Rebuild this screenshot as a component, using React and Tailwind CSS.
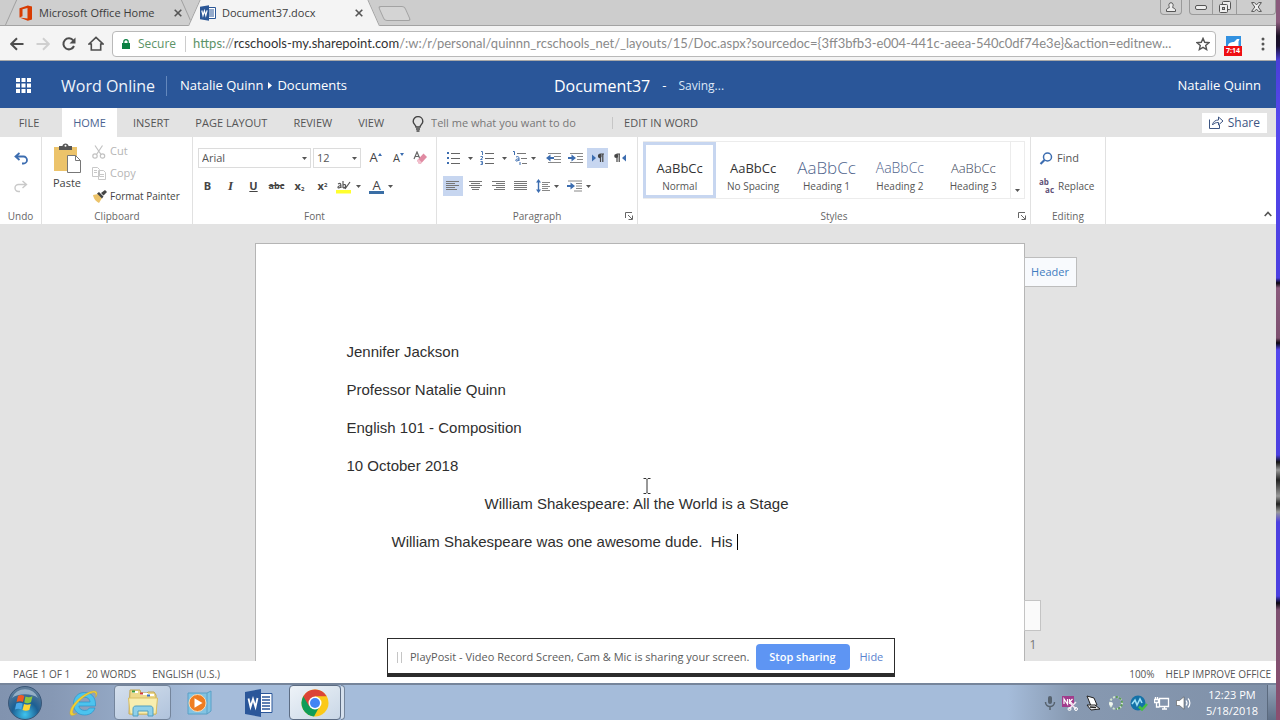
import React from "react";

const STYLES = [
  { name: "Normal", cls: "text-[13px] text-[#333]", frame: "border-[#c7d6f0]" },
  { name: "No Spacing", cls: "text-[13px] text-[#333]", frame: "border-transparent" },
  { name: "Heading 1", cls: "text-[17px] font-light text-[#4f648c]", frame: "border-transparent" },
  { name: "Heading 2", cls: "text-[14px] font-light text-[#4f648c]", frame: "border-transparent" },
  { name: "Heading 3", cls: "text-[13px] font-light text-[#3c4558]", frame: "border-transparent" },
];

/* ---------- small shared pieces ---------- */

function Arrow() {
  return (
    <svg width="5" height="3" viewBox="0 0 5 3" className="shrink-0 fill-[#555]" aria-hidden="true">
      <path d="M0 0h5L2.500 3z" />
    </svg>
  );
}

function Tool({ label, w = "w-[23px]", active, disabled, children }) {
  return (
    <button
      type="button"
      aria-label={label}
      disabled={disabled}
      className={`flex h-5 shrink-0 items-center justify-center gap-1 ${w} ${active ? "bg-[#c7d6f0]" : ""}`}
    >
      {children}
    </button>
  );
}

function Group({ label, className, launcher, children }) {
  return (
    <section aria-label={label} className={`flex shrink-0 flex-col pt-1 ${className}`}>
      <div className="h-[67px]">{children}</div>
      <div className="flex h-4 items-center text-[10px] text-[#666]">
        <span className={`flex-1 text-center ${launcher ? "pl-3" : ""}`}>{label}</span>
        {launcher && (
          <button type="button" aria-label={`${label} settings`} className="mr-1 w-2">
            <svg width="8" height="8" viewBox="0 0 8 8" fill="none" stroke="#666" aria-hidden="true">
              <path d="M.5 6V.5H7M3 3l4 4M7.500 3.500v4h-4" />
            </svg>
          </button>
        )}
      </div>
    </section>
  );
}

function Lines({ rows }) {
  return (
    <svg width="14" height="12" viewBox="0 0 14 12" stroke="#777" aria-hidden="true">
      {rows.map(([a, b], i) => (
        <path key={i} d={`M${a} ${i * 2 + 1.5}H${b}`} />
      ))}
    </svg>
  );
}

/* ---------- browser chrome ---------- */

function BrowserTab({ icon, title, active, className }) {
  const fill = active
    ? "before:bg-[#f4f4f4] after:bg-[#f4f4f4] z-10 h-[26px]"
    : "before:bg-[#cfcfcf] after:bg-[#cfcfcf] h-[25px]";
  return (
    <div
      className={`relative flex items-center before:absolute before:inset-y-0 before:left-0 before:w-1/2 before:origin-bottom before:-skew-x-[24deg] before:border-l before:border-[#a0a0a0] after:absolute after:inset-y-0 after:right-0 after:w-1/2 after:origin-bottom after:skew-x-[24deg] after:border-r after:border-[#a0a0a0] ${fill} ${className}`}
    >
      <button type="button" className="relative z-10 flex flex-1 items-center gap-[6px] text-[11px] text-[#3c3c3c]">
        {icon}
        <span>{title}</span>
      </button>
      <button type="button" aria-label={`Close ${title}`} className="relative z-10">
        <svg width="8" height="8" viewBox="0 0 8 8" stroke="#555" strokeWidth="1.600" aria-hidden="true">
          <path d="M.7.7l6.600 6.600M7.300.7L.7 7.300" />
        </svg>
      </button>
    </div>
  );
}

function OfficeIcon() {
  return (
    <svg width="14" height="16" viewBox="0 0 14 16" aria-hidden="true">
      <path d="M.5 3.200L8.800.4l4.200 1.200v12.800L8.800 15.700.5 12.600l8 .9V3L3.500 4.200v7L.5 12.400z" fill="#d83b01" />
    </svg>
  );
}

function WordFileIcon() {
  return (
    <svg width="16" height="16" viewBox="0 0 16 16" aria-hidden="true">
      <path d="M7.500 2.500h8v11h-8z" fill="#fff" stroke="#2b5797" />
      <path d="M9 5h5M9 7h5M9 9h5M9 11h5" stroke="#2b5797" />
      <path d="M0 1.800L9 .3v15.400L0 14.200z" fill="#2b5797" />
      <path d="M1.800 5.500l1.200 5 1.400-4.700 1.400 4.700 1.300-5.200" fill="none" stroke="#fff" strokeWidth="1.200" />
    </svg>
  );
}

function TabStrip() {
  return (
    <div className="flex h-[26px] items-start border-b border-[#a3a3a3] bg-[#cdcdcd]">
      <BrowserTab icon={<OfficeIcon />} title="Microsoft Office Home" className="ml-[5px] w-[188px] pl-[14px] pr-[11px] pt-px" />
      <BrowserTab icon={<WordFileIcon />} title="Document37.docx" active className="-ml-[5px] w-[192px] pl-[12px] pr-[17px]" />
      <button
        type="button"
        aria-label="New tab"
        className="ml-[1px] mt-[6px] h-[15px] w-[27px] skew-x-[24deg] rounded-[3px] border border-[#a3a3a3] bg-[#d4d4d4]"
      />
      <div className="flex-1" />
      <button type="button" aria-label="Profile" className="mr-[7px] flex h-[15px] w-[22px] items-center justify-center rounded-b border border-t-0 border-[#9a9a9a]">
        <svg width="10" height="10" viewBox="0 0 10 10" fill="#eee" stroke="#555" aria-hidden="true">
          <path d="M.5 9.500V8c0-1.200 1.500-2 2.700-2.200V4.500C2.600 3.800 2.600.7 5 .7s2.400 3.100 1.800 3.800v1.300C8 6 9.500 6.800 9.500 8v1.500z" />
        </svg>
      </button>
      <div className="flex h-[15px] divide-x divide-[#9a9a9a] rounded-b border border-t-0 border-[#9a9a9a]">
        <button type="button" aria-label="Minimize" className="flex w-[23px] items-center justify-center">
          <svg width="12" height="5" viewBox="0 0 12 5" fill="#eee" stroke="#555" aria-hidden="true">
            <rect x=".5" y=".5" width="11" height="4" rx="1.500" />
          </svg>
        </button>
        <button type="button" aria-label="Restore" className="flex w-[24px] items-center justify-center">
          <svg width="12" height="12" viewBox="0 0 12 12" fill="#eee" stroke="#555" aria-hidden="true">
            <rect x="3.500" y=".5" width="8" height="8" rx="1" />
            <rect x=".5" y="3.500" width="8" height="8" rx="1" />
            <rect x="3.500" y="6.500" width="2" height="2" fill="#bbb" />
          </svg>
        </button>
        <button type="button" aria-label="Close" className="flex w-[38px] items-center justify-center">
          <svg width="11" height="10" viewBox="0 0 11 10" fill="#eee" stroke="#555" strokeLinejoin="round" aria-hidden="true">
            <path d="M.6.600h2.800l2.100 2.300L7.600.6h2.800L7.200 5l3.200 4.400H7.600L5.500 7.100 3.400 9.400H.6L3.800 5z" />
          </svg>
        </button>
      </div>
    </div>
  );
}

function Toolbar() {
  return (
    <div className="flex h-[35px] items-center border-b border-[#a9a9a9] bg-[#f4f4f4] pl-[10px] pt-px">
      <div className="flex items-center gap-[12px]">
        <button type="button" aria-label="Back">
          <svg width="14" height="14" viewBox="0 0 14 14" fill="none" stroke="#4d4d4d" strokeWidth="2" aria-hidden="true">
            <path d="M13.500 7H1.500M7 1.200L1.200 7 7 12.800" />
          </svg>
        </button>
        <button type="button" aria-label="Forward" disabled>
          <svg width="14" height="14" viewBox="0 0 14 14" fill="none" stroke="#cfcfcf" strokeWidth="2" aria-hidden="true">
            <path d="M.5 7h12M7 1.200L12.800 7 7 12.800" />
          </svg>
        </button>
        <button type="button" aria-label="Reload">
          <svg width="14" height="14" viewBox="0 0 14 14" aria-hidden="true">
            <path d="M12 9A5.500 5.500 0 1 1 11.300 3.500" fill="none" stroke="#4d4d4d" strokeWidth="2" />
            <path d="M13.500.5v6h-6z" fill="#4d4d4d" />
          </svg>
        </button>
        <button type="button" aria-label="Home">
          <svg width="16" height="15" viewBox="0 0 16 15" fill="none" stroke="#4d4d4d" strokeWidth="1.600" aria-hidden="true">
            <path d="M1 8L8 1.300 15 8h-2.300v6H3.300V8z" />
          </svg>
        </button>
      </div>
      <div className="ml-[8px] flex h-[26px] min-w-0 flex-1 items-center rounded-sm border border-[#b9b9b9] bg-white">
        <button type="button" className="ml-[9px] flex shrink-0 items-center gap-[8px] text-[12px] text-[#5c9367]">
          <svg width="8" height="10" viewBox="0 0 8 10" aria-hidden="true">
            <path d="M1.800 4.500V2.800a2.200 2.200 0 0 1 4.400 0v1.700" fill="none" stroke="#0b8043" strokeWidth="1.200" />
            <rect y="4" width="8" height="6" fill="#0b8043" />
          </svg>
          Secure
        </button>
        <span className="ml-[9px] h-4 w-px shrink-0 bg-[#ccc]" />
        <div
          role="textbox"
          aria-label="Address"
          tabIndex={0}
          className="ml-[7px] min-w-0 flex-1 overflow-hidden whitespace-nowrap font-['Lato',sans-serif] text-[13px] text-[#8a8a8a]"
        >
          <span className="text-[#5c9367]">https</span>://<span className="text-[#333]">rcschools-my.sharepoint.com</span>
          /:w:/r/personal/quinnn_rcschools_net/_layouts/15/Doc.aspx?sourcedoc=&#123;3ff3bfb3-e004-441c-aeea-540c0df74e3e&#125;&amp;action=editnew...
        </div>
        <button type="button" aria-label="Bookmark" className="mr-[5px] shrink-0">
          <svg width="14" height="14" viewBox="0 0 14 14" fill="none" stroke="#555" strokeWidth="1.400" aria-hidden="true">
            <path d="M7 1.400l1.700 3.900 4.200.4-3.200 2.800.95 4.100L7 10.400l-3.650 2.200.95-4.100L1.100 5.700l4.200-.4z" />
          </svg>
        </button>
      </div>
      <button type="button" aria-label="Screen recorder" className="ml-[8px] flex w-[18px] flex-col items-center pt-1">
        <svg width="15" height="10" viewBox="0 0 15 10" aria-hidden="true">
          <path d="M0 0h15v10H0z" fill="#3291e0" />
          <path d="M2 10c0-3 3-4 6-4l3-3h2.500l-1 2.500V10z" fill="#fff" />
        </svg>
        <span className="h-[10px] w-full bg-[#ee0f14] text-center text-[7px] font-bold leading-[10px] text-white">7:14</span>
      </button>
      <button type="button" aria-label="Browser menu" className="ml-[19px] mr-[11px]">
        <svg width="4" height="14" viewBox="0 0 4 14" fill="#555" aria-hidden="true">
          <circle cx="2" cy="2" r="1.500" />
          <circle cx="2" cy="7" r="1.500" />
          <circle cx="2" cy="12" r="1.500" />
        </svg>
      </button>
    </div>
  );
}

/* ---------- Word Online ---------- */

function AppHeader() {
  return (
    <header className="grid h-[47px] grid-cols-[1fr_auto_1fr] items-center bg-[#2a5699] pt-[2px] text-[13px] text-white">
      <div className="flex items-center">
        <button type="button" aria-label="App launcher" className="ml-4">
          <svg width="15" height="15" viewBox="0 0 15 15" fill="#fff" aria-hidden="true">
            {[0, 5.5, 11].map((y) => [0, 5.5, 11].map((x) => <rect key={`${x}-${y}`} x={x} y={y} width="4" height="4" />))}
          </svg>
        </button>
        <a href="#home" className="ml-[30px] text-[16px] text-[#eef3fb]">Word Online</a>
        <span className="ml-[11px] h-5 w-px bg-[#6488bd]" />
        <nav aria-label="Location" className="ml-[13px] flex items-center gap-[5px]">
          <a href="#owner">Natalie Quinn</a>
          <svg width="4" height="7" viewBox="0 0 4 7" fill="#fff" aria-hidden="true">
            <path d="M0 0l4 3.500L0 7z" />
          </svg>
          <a href="#documents">Documents</a>
        </nav>
      </div>
      <div className="flex items-center pl-[2px]">
        <h1 className="text-[16px]">Document37</h1>
        <span className="mx-[12px]">-</span>
        <span className="text-[12px] text-[#dbe7f7]">Saving...</span>
      </div>
      <a href="#account" className="mr-[15px] justify-self-end">Natalie Quinn</a>
    </header>
  );
}

function RibbonTabs() {
  return (
    <div className="flex h-[29px] items-center bg-[#e3e3e3] text-[11px] text-[#555]">
      <button type="button" className="h-full w-[62px] pr-1 pt-[2px]">FILE</button>
      <button type="button" className="mr-[3px] h-full w-[55px] bg-white pt-[2px] text-[#4a6390]">HOME</button>
      <button type="button" className="h-full px-[13px] pt-[2px]">INSERT</button>
      <button type="button" className="h-full px-[13px] pt-[2px]">PAGE LAYOUT</button>
      <button type="button" className="h-full px-[13px] pt-[2px]">REVIEW</button>
      <button type="button" className="h-full px-[13px] pt-[2px]">VIEW</button>
      <label className="ml-[15px] flex h-full items-center gap-[7px] pt-[2px]">
        <svg width="12" height="16" viewBox="0 0 12 16" fill="none" stroke="#444" strokeWidth="1.400" aria-hidden="true">
          <path d="M4 11c0-2-2.800-3-2.800-5.600a4.800 4.800 0 0 1 9.600 0C10.800 8 8 9 8 11zM4 13h4M4.500 15h3" />
        </svg>
        <input
          aria-label="Tell me what you want to do"
          placeholder="Tell me what you want to do"
          className="w-[181px] bg-transparent outline-none placeholder:text-[#777]"
        />
      </label>
      <span className="h-3 w-px bg-[#c6c6c6]" />
      <button type="button" className="h-full px-[11px] pt-[2px]">EDIT IN WORD</button>
      <div className="flex-1" />
      <button type="button" className="mr-[9px] flex h-5 items-center gap-1 bg-white px-[7px] text-[12px] text-[#3d5583]">
        <svg width="15" height="13" viewBox="0 0 15 13" fill="none" stroke="#3d5583" aria-hidden="true">
          <path d="M.5 3.500v9h10V9M3.500 9c.5-3.500 3-5 6-5V1l4.500 4-4.500 4V6.500c-2.500 0-4.500.5-6 2.500z" />
        </svg>
        Share
      </button>
    </div>
  );
}

function UndoGroup() {
  return (
    <Group label="Undo" className="w-[42px] border-r border-[#e1e1e1]">
      <div className="flex flex-col items-center gap-2 pt-[7px]">
        <Tool label="Undo">
          <svg width="14" height="13" viewBox="0 0 14 13" fill="none" stroke="#3c6db0" strokeWidth="1.800" aria-hidden="true">
            <path d="M5.500 1L1.500 4.500l4 3.500M2 4.500h7.500a3.500 3.500 0 0 1 0 7H8" />
          </svg>
        </Tool>
        <Tool label="Redo" disabled>
          <svg width="14" height="13" viewBox="0 0 14 13" fill="none" stroke="#c9c9c9" strokeWidth="1.400" aria-hidden="true">
            <path d="M8.500 1l4 3.500-4 3.500M12 4.500H4.500a3.500 3.500 0 0 0 0 7H6" />
          </svg>
        </Tool>
      </div>
    </Group>
  );
}

function ClipboardGroup() {
  return (
    <Group label="Clipboard" className="w-[151px] border-r border-[#e1e1e1]">
      <div className="flex">
        <button type="button" className="flex w-[50px] flex-col items-center gap-[2px] pt-[2px] text-[11px] leading-4 text-[#444]">
          <svg width="28" height="30" viewBox="0 0 28 30" aria-hidden="true">
            <path d="M1 4h23v24H1z" fill="#ecc36a" />
            <path d="M6 3h3.500c0-3.500 6-3.500 6 0H19v4H6z" fill="#555" />
            <circle cx="12.500" cy="2.700" r="1" fill="#fff" />
            <path d="M14.500 12.500h8l5 5v12h-13z" fill="#fff" stroke="#777" />
            <path d="M22.500 12.500v5h5" fill="none" stroke="#777" />
          </svg>
          Paste
        </button>
        <div className="flex flex-col items-start text-[11px] text-[#444]">
          <button type="button" disabled className="flex h-[21px] items-center gap-1 text-[#b5b5b5]">
            <svg width="14" height="14" viewBox="0 0 14 14" fill="none" stroke="#c2c2c2" strokeWidth="1.200" aria-hidden="true">
              <path d="M3 .5l6 9M10.500.5l-6 9" />
              <circle cx="3" cy="11" r="2.200" />
              <circle cx="10.500" cy="11" r="2.200" />
            </svg>
            Cut
          </button>
          <button type="button" disabled className="flex h-[23px] items-center gap-1 text-[#b5b5b5]">
            <svg width="14" height="13" viewBox="0 0 14 13" fill="#fff" stroke="#c8c8c8" aria-hidden="true">
              <path d="M.5.500h5l2 2v7h-7zM6.500 3.500h5l2 2v7h-7z" />
              <path d="M2 3.500h3M2 5.500h3M8 7.500h4M8 9.500h4" />
            </svg>
            Copy
          </button>
          <button type="button" className="flex h-[22px] items-center gap-[2px] text-[10px]">
            <svg width="16" height="13" viewBox="0 0 16 13" aria-hidden="true">
              <path d="M1 5l5-1 4 4-3 5c-2-1-5-3-6-8z" fill="#ecc36a" />
              <path d="M5 3.500l2-1.500 4.500 4.500-1.500 2zM9 3l4-3 2 2-3.500 3.500z" fill="#444" />
            </svg>
            Format Painter
          </button>
        </div>
      </div>
    </Group>
  );
}

function FontSelect({ label, value, options, w }) {
  return (
    <label className={`relative flex h-5 items-center ${w}`}>
      <select aria-label={label} defaultValue={value} className="h-full w-full appearance-none border border-[#dcdcdc] bg-white pl-[3px] text-[11px] text-[#555]">
        {options.map((o) => (
          <option key={o}>{o}</option>
        ))}
      </select>
      <span className="pointer-events-none absolute right-1">
        <Arrow />
      </span>
    </label>
  );
}

function FontGroup() {
  return (
    <Group label="Font" className="w-[244px] border-r border-[#e1e1e1]">
      <div className="flex h-[34px] items-center pl-[5px]">
        <FontSelect label="Font" value="Arial" options={["Arial", "Calibri", "Times New Roman"]} w="w-[113px]" />
        <span className="w-[2px]" />
        <FontSelect label="Font size" value="12" options={["10", "11", "12", "14"]} w="w-[48px]" />
        <span className="w-[3px]" />
        <Tool label="Grow font">
          <span className="text-[13px] text-[#444]">A</span>
          <svg width="4" height="3" viewBox="0 0 4 3" className="-ml-1 -mt-2 fill-[#3c6db0]" aria-hidden="true"><path d="M0 3h4L2 0z" /></svg>
        </Tool>
        <Tool label="Shrink font">
          <span className="text-[11px] text-[#444]">A</span>
          <svg width="4" height="3" viewBox="0 0 4 3" className="-ml-1 -mt-2 fill-[#3c6db0]" aria-hidden="true"><path d="M0 0h4L2 3z" /></svg>
        </Tool>
        <Tool label="Clear formatting" w="w-5">
          <svg width="14" height="14" viewBox="0 0 14 14" aria-hidden="true">
            <path d="M1 8L4 1l3 7M2 5.500h4" fill="none" stroke="#666" strokeWidth="1.200" />
            <path d="M4 9.500l6.500-7 3.500 3.500-6.500 7H6z" fill="#e08aa2" />
            <path d="M4 9.500L5.500 8 9 11.500 7.500 13H6z" fill="#f2c0cd" />
          </svg>
        </Tool>
      </div>
      <div className="flex h-[22px] items-center pl-[3px] text-[11px] font-bold text-[#444]">
        <Tool label="Bold">B</Tool>
        <Tool label="Italic"><span className="font-['Liberation_Serif',serif] text-[13px] italic">I</span></Tool>
        <Tool label="Underline"><span className="underline">U</span></Tool>
        <Tool label="Strikethrough"><span className="text-[9px] line-through">abc</span></Tool>
        <Tool label="Subscript"><span>x<sub className="text-[6px]">2</sub></span></Tool>
        <Tool label="Superscript"><span>x<sup className="text-[6px]">2</sup></span></Tool>
        <Tool label="Highlight color" w="w-[28px]">
          <svg width="16" height="15" viewBox="0 0 16 15" aria-hidden="true">
            <path d="M0 11h15v3.500H0z" fill="#ffff2e" />
            <path d="M2 5c3-1.500 3 0 3 4M5 6.500C2 6.500 1 9 3 9l2-1M7 2v7M7 6c3-2 4 3 0 3M9 10l5-7" fill="none" stroke="#555" strokeWidth="1.200" />
          </svg>
          <Arrow />
        </Tool>
        <Tool label="Font color" w="w-[38px]">
          <span className="flex w-[15px] flex-col items-center border-b-[3px] border-[#3a6ea5] text-[13px] font-normal leading-3">A</span>
          <Arrow />
        </Tool>
      </div>
    </Group>
  );
}

function ListIcon({ marks }) {
  return (
    <svg width="14" height="14" viewBox="0 0 14 14" aria-hidden="true">
      <path d="M5 2.500h9M5 7.500h9M5 12.500h9" stroke="#666" />
      {marks}
    </svg>
  );
}

function ParagraphGroup() {
  return (
    <Group label="Paragraph" launcher className="w-[201px] border-r border-[#e1e1e1]">
      <div className="flex h-[34px] items-center pl-[5px]">
        <Tool label="Bullets" w="w-[34px]">
          <ListIcon marks={<path d="M1 1h2v2H1zM1 6h2v2H1zM1 11h2v2H1z" fill="#3c6db0" />} />
          <span className="ml-1"><Arrow /></span>
        </Tool>
        <Tool label="Numbering" w="w-[34px]">
          <ListIcon marks={<path d="M1 .5h1.500V4M.5 5.500h2V7l-2 1.500h2M.5 10.500h2v3h-2M1 12h1.500" fill="none" stroke="#3c6db0" strokeWidth=".9" />} />
          <span className="ml-1"><Arrow /></span>
        </Tool>
        <Tool label="Multilevel list" w="w-[28px]">
          <svg width="15" height="14" viewBox="0 0 15 14" aria-hidden="true">
            <path d="M5 2.500h9M9 7.500h6M10 12.500h5" stroke="#777" />
            <path d="M1 .5h1.500V4M4 6c2-1 3 0 3 1v3M7 8C3 7.500 3 10.500 5 10l2-1M8 11v3" fill="none" stroke="#3c6db0" />
          </svg>
          <Arrow />
        </Tool>
        <Tool label="Decrease indent" w="ml-1 w-[22px]">
          <svg width="15" height="12" viewBox="0 0 15 12" aria-hidden="true">
            <path d="M2 1.500h13M8 4.500h7M8 7.500h7M2 10.500h13" stroke="#888" />
            <path d="M4.500 2.500L0 6l4.500 3.500V7H8V5H4.500z" fill="#3c6db0" />
          </svg>
        </Tool>
        <Tool label="Increase indent" w="w-[22px] mr-px">
          <svg width="15" height="12" viewBox="0 0 15 12" aria-hidden="true">
            <path d="M2 1.500h13M9 4.500h6M9 7.500h6M2 10.500h13" stroke="#888" />
            <path d="M3.500 2.500L8 6 3.500 9.500V7H0V5h3.500z" fill="#3c6db0" />
          </svg>
        </Tool>
        <Tool label="Left-to-right" active w="w-[21px]">
          <svg width="12" height="10" viewBox="0 0 12 10" aria-hidden="true">
            <path d="M0 1.500L4 5 0 8.500z" fill="#3c6db0" />
            <path d="M8.500 5a2 2 0 0 1 0-4H12M8.500 1v8M10.800 1v8" fill="none" stroke="#444" strokeWidth="1.200" />
            <circle cx="8" cy="3" r="1.700" fill="#444" />
          </svg>
        </Tool>
        <Tool label="Right-to-left">
          <svg width="12" height="10" viewBox="0 0 12 10" aria-hidden="true">
            <path d="M12 1.500L8 5l4 3.500z" fill="#3c6db0" />
            <path d="M2.500 1H6M3 1v8M5.200 1v8" fill="none" stroke="#444" strokeWidth="1.200" />
            <circle cx="2.200" cy="3" r="2" fill="#444" />
          </svg>
        </Tool>
      </div>
      <div className="flex h-[22px] items-center pl-[6px]">
        <Tool label="Align left" active w="w-5"><Lines rows={[[0, 13], [0, 9], [0, 13], [0, 9], [0, 11]]} /></Tool>
        <Tool label="Align center" w="ml-[2px] w-[22px]"><Lines rows={[[0, 13], [2, 11], [0, 13], [2, 11], [3, 10]]} /></Tool>
        <Tool label="Align right"><Lines rows={[[0, 13], [4, 13], [0, 13], [4, 13], [2, 13]]} /></Tool>
        <Tool label="Justify" w="w-[22px]"><Lines rows={[[0, 13], [0, 13], [0, 13], [0, 13], [0, 13]]} /></Tool>
        <Tool label="Line spacing" w="w-[30px]">
          <svg width="14" height="14" viewBox="0 0 14 14" aria-hidden="true">
            <path d="M6 3.500h8M6 5.500h6M6 7.500h8M6 9.500h6M6 11.500h8" stroke="#888" />
            <path d="M2.500 0L5 3.500H3.200v7H5L2.500 14 0 10.500h1.800v-7H0z" fill="#3c6db0" />
          </svg>
          <Arrow />
        </Tool>
        <Tool label="Special indent" w="w-[34px]">
          <svg width="15" height="12" viewBox="0 0 15 12" aria-hidden="true">
            <path d="M1 1h14M9 3.500h6M9 6h6M9 8.500h6M7 11h8" stroke="#888" />
            <path d="M3.500 2.500L8 6 3.500 9.500V7H0V5h3.500z" fill="#3c6db0" />
          </svg>
          <Arrow />
        </Tool>
      </div>
    </Group>
  );
}

function StylesGroup() {
  return (
    <Group label="Styles" launcher className="w-[393px] border-r border-[#e1e1e1]">
      <div className="mx-[5px] flex h-[58px] border border-l-0 border-[#ececec]">
        <div className="grid flex-1 grid-cols-5">
          {STYLES.map((s) => (
            <button key={s.name} type="button" className={`flex flex-col items-center justify-end border-[3px] pb-px ${s.frame}`}>
              <span className={`leading-5 ${s.cls}`}>AaBbCc</span>
              <span className="text-[10px] leading-4 text-[#555]">{s.name}</span>
            </button>
          ))}
        </div>
        <button type="button" aria-label="More styles" className="flex w-[14px] items-end justify-center border-l border-[#ececec] pb-[6px]">
          <Arrow />
        </button>
      </div>
    </Group>
  );
}

function EditingGroup() {
  return (
    <Group label="Editing" className="w-[75px] border-r border-[#e1e1e1]">
      <div className="flex flex-col items-start gap-2 pl-[8px] pt-[7px] text-[11px] text-[#555]">
        <button type="button" className="flex h-5 items-center gap-1">
          <svg width="14" height="13" viewBox="0 0 14 13" fill="none" stroke="#3c6db0" aria-hidden="true">
            <circle cx="8.500" cy="5" r="4" strokeWidth="1.500" />
            <path d="M5.500 8L1.500 12" strokeWidth="2.200" />
          </svg>
          Find
        </button>
        <button type="button" className="flex h-5 items-center gap-1 text-[10px]">
          <span className="flex w-[15px] flex-col text-[8px] font-bold leading-[8px] text-[#5f5277]">
            <span className="self-start">ab</span>
            <span className="self-end">ac</span>
          </span>
          Replace
        </button>
      </div>
    </Group>
  );
}

function Ribbon() {
  return (
    <div className="flex bg-white">
      <UndoGroup />
      <ClipboardGroup />
      <FontGroup />
      <ParagraphGroup />
      <StylesGroup />
      <EditingGroup />
      <div className="flex flex-1 items-end justify-end pb-[7px] pr-1">
        <button type="button" aria-label="Collapse ribbon">
          <svg width="8" height="6" viewBox="0 0 8 6" fill="none" stroke="#555" strokeWidth="1.600" aria-hidden="true">
            <path d="M.7 5L4 1.500 7.300 5" />
          </svg>
        </button>
      </div>
    </div>
  );
}

function Page() {
  return (
    <main className="flex min-h-0 flex-1 justify-center bg-[#e3e3e3] pl-[3px] pt-[19px]">
      <article className="relative w-[770px] border border-b-0 border-[#b5b5b5] bg-white">
        <div
          role="textbox"
          aria-multiline="true"
          aria-label="Document body"
          tabIndex={0}
          className="pl-[91px] pr-[97px] pt-[89px] font-['Liberation_Sans',Arial,sans-serif] text-[15px] leading-[38px] text-[#2f2f2f]"
        >
          <p>Jennifer Jackson</p>
          <p>Professor Natalie Quinn</p>
          <p>English 101 - Composition</p>
          <p>10 October 2018</p>
          <p className="text-center">William Shakespeare: All the World is a Stage</p>
          <p className="whitespace-pre-wrap indent-[45px]">
            {"William Shakespeare was one awesome dude.  His "}
            <span className="inline-block h-4 w-px bg-black align-[-3px]" />
          </p>
        </div>
        <button type="button" className="absolute left-full top-[13px] h-[30px] w-[53px] border border-[#bdbdbd] bg-[#f8fafd] text-[11px] text-[#3f7cc0]">
          Header
        </button>
        <button type="button" aria-label="Footer" className="absolute left-full top-[356px] h-[31px] w-[17px] border border-[#c4c4c4] bg-[#fafafa]" />
        <span className="absolute left-full top-[393px] pl-[6px] text-[12px] leading-4 text-[#777]">1</span>
        <svg width="8" height="16" viewBox="0 0 8 16" fill="none" stroke="#333" className="absolute left-[387px] top-[234px]" aria-hidden="true">
          <path d="M.5.500H3l1 1 1-1h2.500M4 1.500v13M.5 15.500H3l1-1 1 1h2.500" />
        </svg>
      </article>
    </main>
  );
}

function StatusBar() {
  return (
    <footer className="relative z-10 flex h-[22px] items-center bg-white pl-[13px] pr-[5px] pt-[5px] text-[10px] text-[#555]">
      <span>PAGE 1 OF 1</span>
      <span className="ml-[16px]">20 WORDS</span>
      <button type="button" className="ml-[16px]">ENGLISH (U.S.)</button>
      <span className="flex-1" />
      <button type="button">100%</button>
      <a href="#feedback" className="ml-[11px]">HELP IMPROVE OFFICE</a>
    </footer>
  );
}

function SharingBar() {
  return (
    <div role="status" className="absolute bottom-[43px] left-1/2 z-20 ml-[3px] flex h-[39px] w-[508px] -translate-x-1/2 items-center border border-b-4 border-[#2c2c2c] bg-white pl-[9px] pt-[2px] text-[11px] text-[#5b5b5b]">
      <span className="h-[11px] w-[5px] border-x border-[#c5c5c5]" />
      <span className="ml-[8px] whitespace-nowrap">PlayPosit - Video Record Screen, Cam &amp; Mic is sharing your screen.</span>
      <button type="button" className="ml-[6px] h-[26px] w-[94px] rounded-sm bg-[#5e95f3] font-semibold text-white">Stop sharing</button>
      <button type="button" className="ml-[10px] text-[#5b83cf]">Hide</button>
    </div>
  );
}

/* ---------- Windows taskbar ---------- */

function Taskbar() {
  return (
    <div className="flex h-[37px] items-stretch border-t-2 border-[#76859b] bg-[linear-gradient(90deg,#8193af_0%,#8698b4_4%,#a5bcda_16%,#a5bcda_79%,#8799b1_84%,#7f90a8_100%)]">
      <button type="button" aria-label="Start" className="flex w-[50px] items-center justify-center">
        <svg width="34" height="34" viewBox="0 0 34 34" aria-hidden="true">
          <defs>
            <radialGradient id="orb" cx=".5" cy=".85" r=".8">
              <stop offset="0" stopColor="#3fc4ee" />
              <stop offset=".5" stopColor="#1d5f93" />
              <stop offset="1" stopColor="#5f7c99" />
            </radialGradient>
          </defs>
          <circle cx="17" cy="17" r="16.500" fill="url(#orb)" stroke="#3a5778" />
          <path d="M4 12a14 14 0 0 1 26 0C24 7 10 7 4 12z" fill="#c5d6e4" opacity=".6" />
          <path d="M10 10c2-1.200 4-1.200 6.300 0l-1.300 6c-2-1-4-1-6.500 0z" fill="#ee5a24" />
          <path d="M17.500 10.500c2 1 4.500 1 7-.2l-1.500 6c-2.500 1.200-4.500 1.200-6.800.2z" fill="#8cc63f" />
          <path d="M8.200 17.500c2.500-1 4.500-1 6.500 0l-1.400 6c-2-1-4-1-6.300 0z" fill="#4aa8e8" />
          <path d="M16 18c2 1 4.500 1 6.800 0l-1.500 6c-2.200 1-4.500 1-6.800 0z" fill="#fcd535" />
        </svg>
      </button>
      <button type="button" aria-label="Internet Explorer" className="flex w-[64px] items-center justify-center pl-1">
        <svg width="30" height="30" viewBox="0 0 30 30" aria-hidden="true">
          <path d="M15.500 9.200c3.200 0 5.300 2 5.600 4.800H10c.5-2.800 2.400-4.800 5.500-4.800zM26.500 18v-2C26.500 9 22 4.500 15.500 4.500S4.500 9.300 4.500 16 9 27 15.500 27c5.200 0 9-2.500 10.500-7h-5.600c-.9 1.600-2.500 2.400-4.700 2.400-3.400 0-5.500-1.800-5.800-4.400z" fill="#4cc3ee" stroke="#2a93cb" strokeWidth=".7" />
          <path d="M26.500 9.500c2.500-3.500 2-7-2-6.500C16 4 2.500 15 1 24c-.6 4.500 3 4 7 1.500-3 .7-4.500.4-4.300-2C4.300 17 16 6.500 23.500 4.700c3.200-.7 4 1.300 3 4.800z" fill="#f2cf35" stroke="#cda722" strokeWidth=".4" />
        </svg>
      </button>
      <button type="button" aria-label="File Explorer" className="flex w-[57px] items-center justify-center rounded-sm border border-[#74859c] bg-gradient-to-br from-[#d5e0ed] to-[#b0c3dc]">
        <svg width="32" height="28" viewBox="0 0 32 28" aria-hidden="true">
          <path d="M3 1h10l1 3h6l1-1h6l2 3v19H2z" fill="#edd98c" stroke="#c1a450" />
          <path d="M5 3h6M13 5h8M21 6h6" stroke="#fff" strokeWidth="2" />
          <path d="M5 2.500h3" stroke="#3c9a3c" strokeWidth="2" />
          <path d="M13 4.500h3" stroke="#d23b3b" strokeWidth="2" />
          <path d="M20 6.500h3" stroke="#3a70c4" strokeWidth="2" />
          <path d="M1.500 9h29L29 25H3z" fill="#f8eeb0" stroke="#d9bd62" />
          <path d="M6 27v-7c0-2 1-3 3-3h14c2 0 3 1 3 3v7h-5v-5H11v5z" fill="#8ed0ea" stroke="#4f9fc2" />
        </svg>
      </button>
      <button type="button" aria-label="Media Player" className="flex w-[58px] items-center justify-center">
        <svg width="28" height="26" viewBox="0 0 28 26" aria-hidden="true">
          <path d="M2 3h19l4-2v20l-4 3H2z" fill="#82c3e3" stroke="#5aa0c6" />
          <path d="M21 3v21" stroke="#5aa0c6" />
          <circle cx="11.500" cy="13" r="8.500" fill="#ef7d22" stroke="#fbd9b2" />
          <path d="M8.500 8.200v9.600l8-4.800z" fill="#fff" />
        </svg>
      </button>
      <button type="button" aria-label="Word" className="flex w-[60px] items-center justify-center">
        <svg width="28" height="28" viewBox="0 0 28 28" aria-hidden="true">
          <path d="M14 4.500h13v19H14z" fill="#fff" stroke="#2b579a" />
          <path d="M17 8h8M17 11h8M17 14h8M17 17h8M17 20h8" stroke="#2b579a" strokeWidth="1.500" />
          <path d="M0 3l16-3v28L0 25z" fill="#2b579a" />
          <path d="M3.500 9.500l2 8.500L8 10l2.500 8 2-9" fill="none" stroke="#fff" strokeWidth="1.800" />
        </svg>
      </button>
      <button type="button" aria-label="Chrome" className="flex w-[52px] items-center justify-center rounded-sm border border-[#5d6d84] bg-gradient-to-br from-[#eef3f8] to-[#c9d7e6]">
        <svg width="28" height="28" viewBox="0 0 28 28" aria-hidden="true">
          <circle cx="14" cy="14" r="13.500" fill="#fbc918" />
          <path d="M14 14L2.300 7.250A13.500 13.500 0 0 1 25.700 7.250H14z" fill="#db4437" />
          <path d="M14 14L2.300 7.250A13.500 13.500 0 0 0 13 27.500l5.500-10z" fill="#0f9d58" />
          <path d="M2.300 7.250l6 10.300L14 7.250z" fill="#db4437" />
          <circle cx="14" cy="14" r="6.500" fill="#fff" />
          <circle cx="14" cy="14" r="5" fill="#4285f4" />
        </svg>
      </button>
      <span className="w-1 rounded-r-sm border border-l-0 border-[#74859c] bg-[#d5e0ed]" />
      <div className="flex-1" />
      <div className="flex items-center gap-[6px]">
        <svg width="12" height="16" viewBox="0 0 12 16" aria-hidden="true">
          <rect x="4" y="1" width="4" height="8" rx="2" fill="#57636f" />
          <path d="M1.500 7c0 6 9 6 9 0M6 11.500V15" fill="none" stroke="#57636f" strokeWidth="1.500" />
        </svg>
        <svg width="16" height="16" viewBox="0 0 16 16" aria-hidden="true">
          <path d="M0 1h12v11H0z" fill="#a23c8c" />
          <path d="M2 9V4l3.500 5V4M7.500 4v5M10.500 4L8 6.500l2.500 2.500" fill="none" stroke="#fff" strokeWidth="1.200" />
          <path d="M7 7l7 7M14 7l-7 7" stroke="#f5e8f2" strokeWidth="1.500" />
          <circle cx="7.500" cy="14" r="1.500" fill="none" stroke="#fff" />
          <circle cx="14" cy="14" r="1.500" fill="none" stroke="#fff" />
        </svg>
        <svg width="18" height="16" viewBox="0 0 18 16" aria-hidden="true">
          <path d="M3 1l7 2 3 7-6 1z" fill="#fff" stroke="#222" />
          <path d="M3 10l4 5 9-1-5-4z" fill="#eee" stroke="#222" />
          <path d="M6 12l6 .5" stroke="#222" strokeWidth="1.500" />
        </svg>
        <svg width="16" height="16" viewBox="0 0 16 16" aria-hidden="true">
          <circle cx="8" cy="8" r="6" fill="none" stroke="#cfe3cd" strokeWidth="2" strokeDasharray="2 1.500" />
          <path d="M8 2a6 6 0 0 1 0 12" fill="none" stroke="#5a9a55" strokeWidth="2" strokeDasharray="2 1.500" />
          <circle cx="3" cy="9" r="2" fill="#f1f7f0" />
        </svg>
        <svg width="18" height="16" viewBox="0 0 18 16" aria-hidden="true">
          <circle cx="8" cy="8" r="7.500" fill="#1472a8" />
          <path d="M2 9l3-4 2 5 3-6 2 4" fill="none" stroke="#9fe0f5" strokeWidth="1.600" />
          <path d="M9 11.500l3 3 5-5.500" fill="none" stroke="#45c044" strokeWidth="2.500" />
        </svg>
        <svg width="16" height="15" viewBox="0 0 16 15" fill="none" stroke="#fff" aria-hidden="true">
          <path d="M5.500 3.500h9v8h-9zM8 14h5M10.500 11.500V14M.5 4.500h4v3h-4zM2.500 7.500V12h3M1.500 2v2M3.500 2v2" strokeWidth="1.300" />
        </svg>
        <svg width="16" height="14" viewBox="0 0 16 14" aria-hidden="true">
          <path d="M.5 4.500h3L8 .8v12.400L3.500 9.500h-3z" fill="#fff" stroke="#555" strokeWidth=".6" />
          <path d="M10 4.500c1.200 1.500 1.200 3.500 0 5M12 2.500c2.500 2.500 2.500 6.500 0 9" fill="none" stroke="#fff" strokeWidth="1.200" />
        </svg>
      </div>
      <div className="ml-[14px] mr-[9px] flex flex-col items-center justify-center text-[11px] leading-4 text-white">
        <span>12:23 PM</span>
        <span>5/18/2018</span>
      </div>
      <button type="button" aria-label="Show desktop" className="w-[9px] border-l border-[#5b6a7e] bg-gradient-to-b from-[#95a5ba] to-[#5f7088]" />
    </div>
  );
}

export default function App() {
  return (
    <div className="flex h-screen w-full overflow-hidden font-['Open_Sans','Noto_Sans',sans-serif] leading-normal">
      <div className="relative flex min-w-0 flex-1 flex-col">
        <TabStrip />
        <Toolbar />
        <AppHeader />
        <RibbonTabs />
        <Ribbon />
        <Page />
        <StatusBar />
        <Taskbar />
        <SharingBar />
      </div>
      <div className="w-1 shrink-0 bg-[linear-gradient(180deg,#8a5a7c_0px,#8a5a7c_22px,#1a1024_36px,#1a1030_46px,#4a3fd8_60px,#5548ee_120px,#4c40e0_278px,#0a0510_283px,#8a5a7c_288px,#7d5070_338px,#0a0510_343px,#5548ee_350px,#4c40e0_455px,#111_462px,#999_470px,#222_480px,#999_496px,#222_504px,#999_512px,#4c40e0_522px,#4c40e0_596px,#0a0510_603px,#7d5070_610px,#8a4f70_720px)]" />
    </div>
  );
}
